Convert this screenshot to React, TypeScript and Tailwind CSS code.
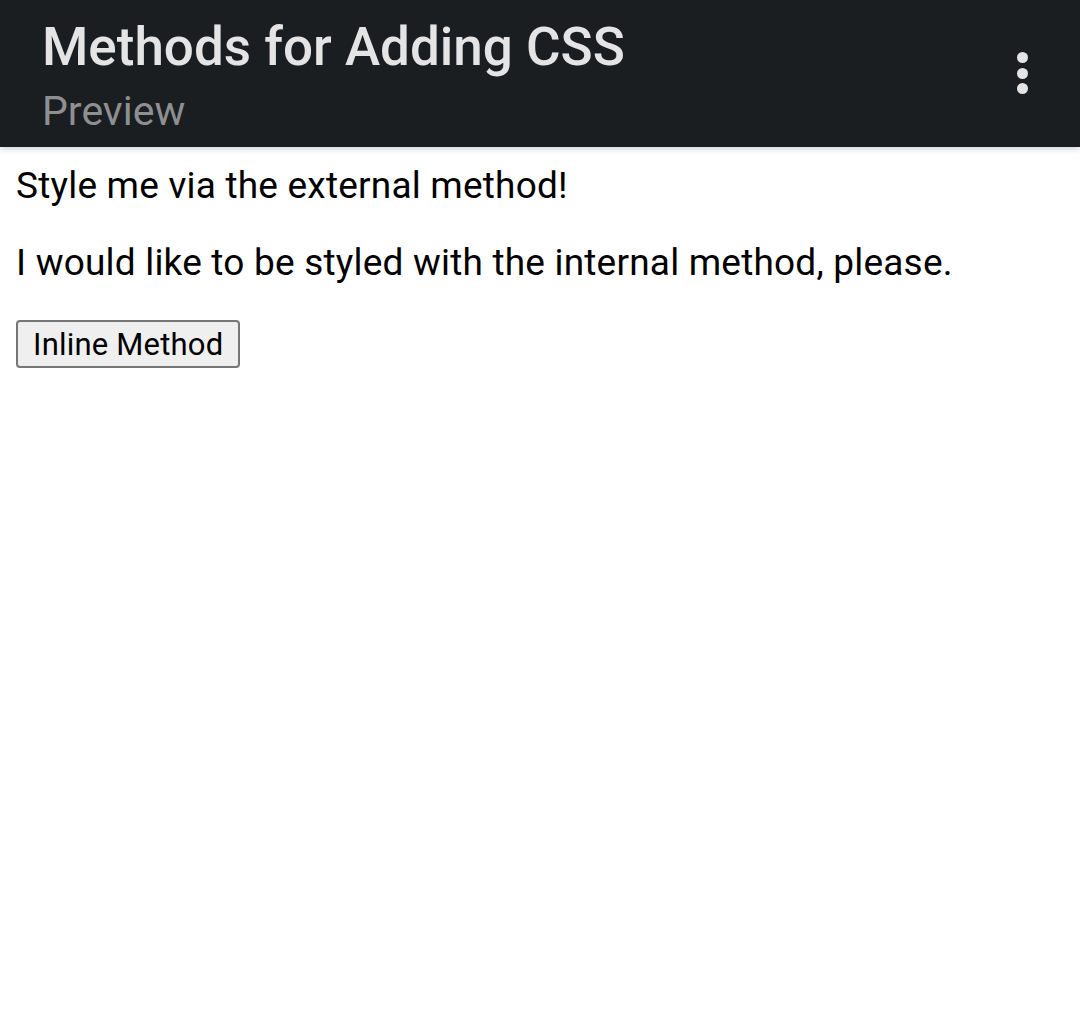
export default function App() {
  return (
    <div className="min-h-[1015px] bg-white font-['Roboto',sans-serif]">
      <header className="relative flex h-[147px] items-start justify-between bg-[#1b1e21] pl-[42px] pr-[52px] shadow-[0_2px_6px_rgba(0,0,0,0.18)]">
        <div className="pt-[16px]">
          <div className="text-[53px] font-medium leading-[62px] text-[#e4e4e4]">Methods for Adding CSS</div>
          <div className="mt-[9px] text-[41px] leading-[48px] text-[#8e8f91]">Preview</div>
        </div>
        <div className="mt-[52px] flex flex-col items-center gap-[4.5px]">
          <span className="h-[11px] w-[11px] rounded-full bg-[#e4e4e4]" />
          <span className="h-[11px] w-[11px] rounded-full bg-[#e4e4e4]" />
          <span className="h-[11px] w-[11px] rounded-full bg-[#e4e4e4]" />
        </div>
      </header>
      <main className="px-[16px] pt-[17px] text-[37px] leading-[43px] tracking-[0.2px] text-black">
        <p>Style me via the external method!</p>
        <p className="mt-[34px]">I would like to be styled with the internal method, please.</p>
        <button className="mt-[36px] h-[48px] rounded-[4px] border-2 border-[#767676] bg-[#efefef] px-[15px] text-[31px] leading-none text-black">
          Inline Method
        </button>
      </main>
    </div>
  );
}
